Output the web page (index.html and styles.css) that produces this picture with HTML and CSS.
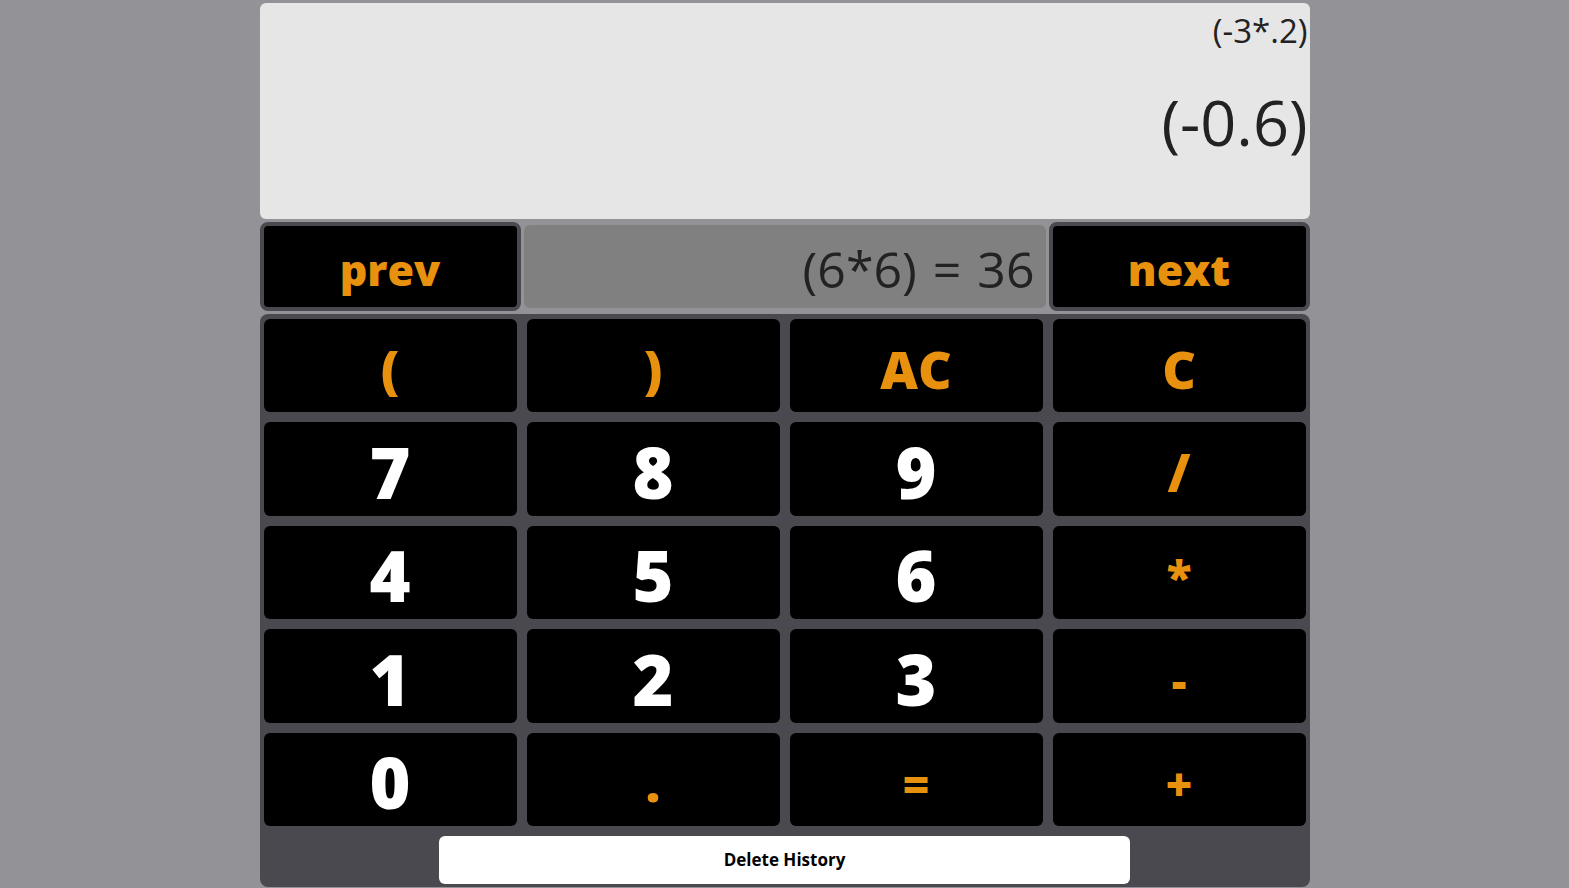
FILE: index.html
```html
<!DOCTYPE html>
<html lang="en">
<head>
<meta charset="utf-8">
<title>Calculator</title>
<link rel="stylesheet" href="styles.css">
</head>
<body>
<div class="calc">
  <div class="display">
    <div class="expr">(-3*.2)</div>
    <div class="result">(-0.6)</div>
  </div>
  <div class="history">
    <button class="hist-btn">prev</button>
    <div class="hist-view">(6*6) = 36</div>
    <button class="hist-btn">next</button>
  </div>
  <div class="keypad">
    <div class="keys">
      <button class="key op paren">(</button>
      <button class="key op paren">)</button>
      <button class="key op">AC</button>
      <button class="key op">C</button>
      <button class="key num">7</button>
      <button class="key num">8</button>
      <button class="key num">9</button>
      <button class="key op slash">/</button>
      <button class="key num">4</button>
      <button class="key num">5</button>
      <button class="key num">6</button>
      <button class="key op small">*</button>
      <button class="key num">1</button>
      <button class="key num">2</button>
      <button class="key num">3</button>
      <button class="key op small">-</button>
      <button class="key num">0</button>
      <button class="key op">.</button>
      <button class="key op small">=</button>
      <button class="key op small">+</button>
    </div>
    <div class="footer">
      <button class="delete">Delete History</button>
    </div>
  </div>
</div>
</body>
</html>
```

FILE: styles.css
```css
* { box-sizing: border-box; }

html, body {
  margin: 0;
  padding: 0;
  background: #939297;
  font-family: "Open Sans", "Noto Sans", sans-serif;
  height: 888px;
  overflow: hidden;
}

.calc {
  width: 1050px;
  margin: 3px auto 0;
  display: flex;
  flex-direction: column;
  gap: 3px;
}

.display {
  height: 216px;
  background: #e6e6e6;
  border-radius: 6px;
  display: flex;
  flex-direction: column;
  align-items: flex-end;
  padding: 6px 2px 0 0;
  color: #222;
}

.expr {
  font-size: 33px;
  line-height: 44px;
}

.result {
  font-size: 63px;
  line-height: 86px;
  margin-top: 26px;
}

.history {
  display: flex;
  gap: 3px;
  height: 89px;
}

.hist-btn {
  width: 261px;
  flex: none;
  background: #000;
  border: 4px solid #4a494f;
  border-radius: 8px;
  color: #e8910e;
  font-family: "Open Sans", "Noto Sans", sans-serif;
  font-weight: 800;
  font-size: 43px;
  line-height: 1;
  padding: 6px 0 0;
  margin: 0;
}

.hist-view {
  flex: 1;
  margin: 3px 0;
  background: #808080;
  border-radius: 6px;
  color: #222;
  font-size: 50px;
  font-weight: 400;
  display: flex;
  align-items: center;
  justify-content: flex-end;
  padding: 4px 11px 0 0;
  word-spacing: 3px;
}

.keypad {
  background: #4a494f;
  border-radius: 8px;
  height: 573px;
  padding: 5px 4px 0;
  display: flex;
  flex-direction: column;
}

.keys {
  display: grid;
  grid-template-columns: repeat(4, 1fr);
  grid-auto-rows: 93.4px;
  gap: 10px;
}

.key {
  background: #000;
  border: none;
  border-radius: 6px;
  margin: 0;
  padding: 0;
  font-family: "Open Sans", "Noto Sans", sans-serif;
  font-weight: 800;
  line-height: 1;
  display: flex;
  align-items: center;
  justify-content: center;
}

.num {
  color: #fff;
  font-size: 70px;
  padding-top: 6px;
}

.op {
  color: #e8910e;
  font-size: 52px;
  padding-top: 6px;
}

.op.small {
  font-size: 46px;
  padding-top: 8px;
}

.footer {
  display: flex;
  justify-content: center;
  padding-top: 10px;
}

.delete {
  width: 691px;
  height: 48px;
  background: #fff;
  border: none;
  border-radius: 6px;
  font-family: "Open Sans", "Noto Sans", sans-serif;
  font-weight: 700;
  font-size: 17px;
  color: #000;
  margin: 0;
  padding: 0;
}
```
